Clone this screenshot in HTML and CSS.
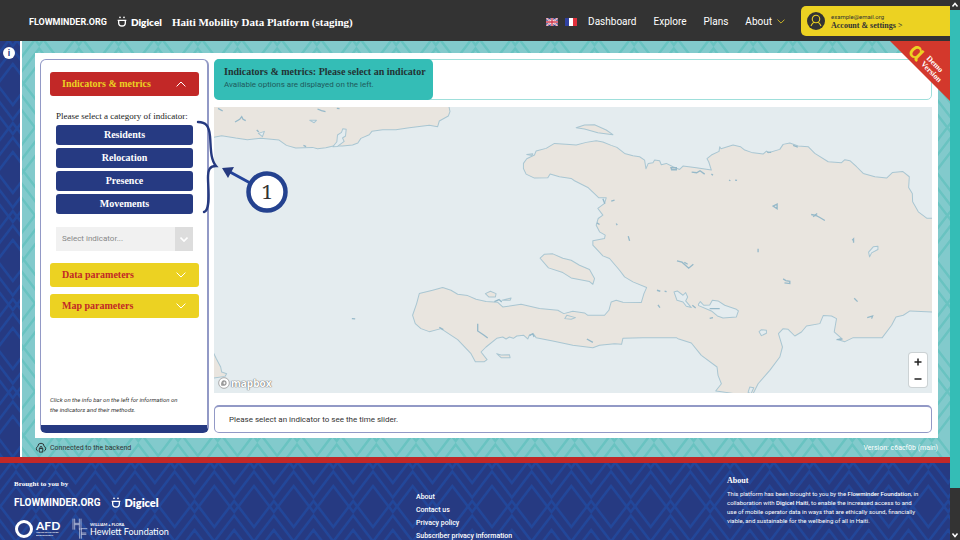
FILE: index.html
```html
<!DOCTYPE html>
<html lang="en">
<head>
<meta charset="utf-8">
<title>Haiti Mobility Data Platform (staging)</title>
<link rel="stylesheet" href="styles.css">
</head>
<body>
<svg class="defs" aria-hidden="true">
  <symbol id="digicel" viewBox="0 0 30 33">
    <path d="M2 13h26M5 14v7a10 9 0 0 0 20 0v-7" fill="none" stroke="currentColor" stroke-width="4"/>
    <circle cx="9" cy="4" r="2.6" fill="currentColor"/><circle cx="21" cy="4" r="2.6" fill="currentColor"/>
  </symbol>
  <symbol id="chevron" viewBox="0 0 10 6"><path d="M.6.6 5 5 9.400.6" fill="none" stroke="currentColor"/></symbol>
</svg>
<div class="window">
  <div class="page">
    <header class="topbar">
      <a class="wordmark" href="#">FLOWMINDER.ORG</a>
      <a class="digicel" href="#"><svg><use href="#digicel"/></svg>Digicel</a>
      <h1>Haiti Mobility Data Platform (staging)</h1>
      <nav>
        <a class="flag" href="#" aria-label="English"><svg viewBox="0 0 36 24"><path fill="#35408c" d="M0 0h36v24H0z"/><path d="m0 0 36 24M36 0 0 24" stroke="#fff" stroke-width="5"/><path d="m0 0 36 24M36 0 0 24" stroke="#d0374b" stroke-width="2"/><path d="M18 0v24M0 12h36" stroke="#fff" stroke-width="8"/><path d="M18 0v24M0 12h36" stroke="#d0374b" stroke-width="4"/></svg></a>
        <a class="flag" href="#" aria-label="Français"><svg viewBox="0 0 36 24"><path fill="#3041a0" d="M0 0h12v24H0z"/><path fill="#fff" d="M12 0h12v24H12z"/><path fill="#e0303c" d="M24 0h12v24H24z"/></svg></a>
        <a href="#">Dashboard</a>
        <a href="#">Explore</a>
        <a href="#">Plans</a>
        <a class="has-menu" href="#">About<svg><use href="#chevron"/></svg></a>
      </nav>
      <a class="account" href="#">
        <svg viewBox="0 0 36 36"><circle cx="18" cy="18" r="18" fill="#333"/><g fill="none" stroke="#ecd222" stroke-width="2.200"><circle cx="18" cy="14" r="7.500"/><path d="M8 28c2-5 4-7 6.500-7.500M28 28c-2-5-4-7-6.500-7.500"/></g></svg>
        <span><small>example@email.org</small><strong>Account &amp; settings &gt;</strong></span>
      </a>
    </header>

    <main>
      <aside class="infobar"><button aria-label="Information">i</button></aside>
      <div class="workspace">
        <div class="panel">
          <section class="controls">
            <button class="accordion open">Indicators &amp; metrics<svg><use href="#chevron"/></svg></button>
            <div class="category">
              <p>Please select a category of indicator:</p>
              <button>Residents</button>
              <button>Relocation</button>
              <button>Presence</button>
              <button>Movements</button>
              <div class="select">
                <select aria-label="Indicator"><option>Select indicator...</option></select>
                <span><svg><use href="#chevron"/></svg></span>
              </div>
            </div>
            <button class="accordion">Data parameters<svg><use href="#chevron"/></svg></button>
            <button class="accordion">Map parameters<svg><use href="#chevron"/></svg></button>
            <p class="hint">Click on the info bar on the left for information on the indicators and their methods.</p>
          </section>
          <section class="results">
            <div class="summary">
              <div><h2>Indicators &amp; metrics: Please select an indicator</h2><p>Available options are displayed on the left.</p></div>
            </div>
            <div class="map">
              <svg class="coast" viewBox="15 21 2151 858" preserveAspectRatio="xMidYMid slice" aria-label="Map of Haiti">
                <g fill="#e9e5df" stroke="#a9c6d2" stroke-width="3" stroke-linejoin="round">
                  <path d="M10 113 38 107 80 114 115 119 155 115 210 120 232 136 260 144 285 143 310 142 325 146 350 143 372 138 400 138 430 135 446 129 455 115 480 104 488 94 520 89 560 89 600 83 660 76 685 80 690 63 717 48 722 35 717 10H10z"/>
                  <path d="M10 750 22 775 35 800 38 815 53 820 48 828 10 834z"/>
                  <path d="M942 190 952 176 975 165 980 153 1010 145 1035 130 1080 133 1100 135 1130 127 1160 122 1180 126 1205 136 1222 142 1245 160 1270 167 1290 170 1305 180 1309 206 1316 190 1330 188 1335 180 1350 182 1355 194 1370 190 1390 200 1410 208 1420 198 1460 203 1505 210 1497 185 1492 176 1505 165 1528 154 1530 140 1534 146 1570 135 1592 140 1605 150 1625 157 1660 162 1670 153 1676 158 1710 148 1720 133 1740 129 1765 138 1795 140 1815 160 1855 185 1895 188 1905 179 1920 182 1940 200 1960 220 1995 230 2030 234 2048 217 2078 214 2098 230 2096 262 2107 280 2108 305 2125 335 2150 354 2180 355V636L2100 632 2080 645 2058 650 2045 675 2017 712 1930 712 1905 724 1885 718 1895 714 1873 695 1880 655 1865 647 1840 646 1830 670 1790 677 1775 695 1755 707 1735 687 1720 685 1706 700 1718 740 1710 770 1680 810 1645 850 1625 890H1570V879L1530 873 1518 872 1535 850 1525 825 1522 800 1475 765 1445 728 1405 715 1400 712 1300 712 1240 714 1236 732 1215 730 1170 735 1150 742 1090 735 1030 722 980 712 972 701 960 704 955 716 943 705 922 707 912 714 900 710 890 716 880 710 862 714 830 740 815 755 833 778 825 784 798 784 785 760 745 718 695 685 660 694 635 685 618 670 610 645 622 610 630 580 670 570 700 562 725 570 745 582 775 586 800 597 830 604 865 606 880 620 935 612 990 625 1045 630 1063 640 1090 633 1125 638 1135 645 1185 645 1198 630 1205 605 1220 600 1240 606 1295 607 1303 580 1311 562 1270 545 1245 530 1230 510 1200 475 1180 467 1150 435 1150 422 1185 415 1187 405 1170 395 1160 375 1166 355 1180 345 1165 325 1185 310 1190 293 1168 293 1135 262 1095 242 1085 235 1050 230 1022 222 1015 233 975 234 950 222 942 205z"/>
                  <path d="M1100 83 1125 75 1155 74 1190 90 1210 104 1165 98 1125 87zM992 474 1005 462 1030 461 1060 474 1085 480 1110 495 1140 508 1155 535 1150 552 1140 544 1085 533 1060 517 1017 503zM828 580 843 573 860 580 858 590 838 590zM878 600 905 593 902 600zM862 760 875 764 900 763 902 772 875 772zM1066 655 1072 645 1098 652 1085 657zM952 163 970 161 968 166z"/>
                </g>
                <g fill="#e4ecef" stroke="#a9c6d2" stroke-width="3" stroke-linejoin="round">
                  <path d="m385 105 12-8 4-11 10 2-2 20-9 6 5 10-20 15-14 1 12-15zM1393 575 1403 572 1420 585 1428 577 1434 590 1428 602 1445 622 1430 618 1420 605 1402 600zM1466 612 1472 604 1482 615 1500 614 1508 600 1525 602 1545 615 1580 627 1586 632 1580 650 1540 653 1523 647 1505 632 1467 616zM1648 694 1655 688 1670 690 1670 699 1655 706zM1976 456 1990 440 2004 438 2004 448 1985 458 1979 470zM1615 876 1620 860 1632 862 1624 880zM148 100 166 94 160 110zM302 61 322 61 315 68z"/>
                </g>
                <g fill="none" stroke="#96b9c9" stroke-width="4">
                  <path d="m78 66 14-8 6-8 4 8 8 4M27 25l14 8M325 27l12 5 12 3M383 25l8 1M143 90l6 6M283 136l8 4M428 655l10 1M805 670v22l18 12 12 9M855 604l14-6 8 7M1132 716l18 10M1205 303l10-3M1220 370l3 5M1256 408l4 14M1402 482l15 4 20 18 14-12M1424 486l10 6M1448 615l10 8M1342 570l10 3M1365 573l6 1M1345 614l6 8M1384 203h16v6h-14zM1446 216l15 2 10-6 14 10M1505 222l5 3M1558 240l4 2M1576 240l6 1M1690 318l12-6v14zM1804 343l14 3 12 6 15 9M1810 350l12-10M1927 420l4-4v12M1645 446v10M1720 536l8 5 12 2v7l-16-2M1933 594l10 10M1972 652l16-5-3 8M1880 718l18-2M1500 654l10-2M1500 625h30M1180 296l6 15M1162 368l8 5M690 681l12 7M1750 136l14 5M1672 156l12 1M960 706l10-6 4 10"/>
                </g>
              </svg>
              <div class="attribution"><svg viewBox="0 0 36 36"><circle cx="18" cy="18" r="16" fill="#fff" stroke="#aaa" stroke-width="3"/><path d="M10 26c-2-10 2-16 9-16a8 8 0 0 1 7 8c0 7-7 10-16 8z" fill="#999"/><path d="m19 13 1.500 3.500L24 18l-3.500 1.500L19 23l-1.500-3.500L14 18l3.500-1.500z" fill="#fff"/></svg>mapbox</div>
              <div class="zoom"><button aria-label="Zoom in"><svg viewBox="0 0 8 8"><path d="M4 .5v7M.5 4h7"/></svg></button><button aria-label="Zoom out"><svg viewBox="0 0 8 8"><path d="M.5 4h7"/></svg></button></div>
            </div>
            <div class="timeline">Please select an indicator to see the time slider.</div>
          </section>
          <svg class="callout" viewBox="190 115 105 105">
            <g fill="none" stroke="#263a80" stroke-linecap="round">
              <path d="M198 122c8 0 11 4 12 14s0 23 6 30c-6 0-8 3-8 12s3 32-4 34" stroke-width="2.400"/>
              <path d="m230 172 22 12" stroke="#24449a" stroke-width="3"/>
            </g>
            <path d="m222 168 12-1-6 11z" fill="#263a80"/>
            <circle cx="267" cy="192" r="18.500" fill="#fff" stroke="#24428f" stroke-width="4.500"/>
            <text x="267" y="199" text-anchor="middle">1</text>
          </svg>
        </div>
        <div class="status">
          <svg viewBox="0 0 34 30"><g fill="none" stroke="#222" stroke-width="2.500"><path d="M8 25a7 7 0 0 1 0-13 9 9 0 0 1 18 0 7 7 0 0 1 0 13"/><path d="M12 18h10v10H12zM14 18v-3a3 3 0 0 1 6 0v3"/></g></svg>
          <span>Connected to the backend</span>
          <span class="version">Version: c6acf0b (main)</span>
        </div>
        <svg class="ribbon" viewBox="0 0 60 60"><path d="M0 0h60v60z" fill="#d3382c"/><g transform="rotate(45)"><text class="alpha" x="20" y="-4">α</text><text class="demo" x="38" y="-13">Demo</text><text class="demo" x="38" y="-5">Version</text></g></svg>
      </div>
    </main>

    <footer>
      <div class="partners">
        <h3>Brought to you by</h3>
        <div class="logos">
          <span class="wordmark">FLOWMINDER.ORG</span>
          <span class="digicel"><svg><use href="#digicel"/></svg>Digicel</span>
        </div>
        <div class="logos">
          <span class="afd"><svg viewBox="0 0 20 20"><circle cx="10" cy="10" r="7.500" fill="none" stroke="#fff" stroke-width="3"/></svg><span>AFD<small>AGENCE FRANÇAISE DE DÉVELOPPEMENT</small></span></span>
          <span class="hewlett"><svg viewBox="0 0 48 63"><g fill="none" stroke="#dfe4f3" stroke-width="2"><path d="M3 2v33M8 2v33M22 2v33M27 2v33M8 16h14M8 20h14M23 31v31M28 31v31M28 32h18M28 45h15M28 49h15"/></g></svg><span><small>WILLIAM + FLORA</small>Hewlett Foundation</span></span>
        </div>
      </div>
      <nav class="links">
        <a href="#">About</a><a href="#">Contact us</a><a href="#">Privacy policy</a><a href="#">Subscriber privacy information</a>
      </nav>
      <div class="about">
        <h3>About</h3>
        <p>This platform has been brought to you by the <b>Flowminder Foundation</b>, in collaboration with <b>Digicel Haiti</b>, to enable the increased access to and use of mobile operator data in ways that are ethically sound, financially viable, and sustainable for the wellbeing of all in Haiti.</p>
      </div>
    </footer>
  </div>
  <div class="scrollbar" aria-hidden="true">
    <svg viewBox="0 0 10 10"><path d="m2.500 6.500 2.500-3 2.500 3"/></svg>
    <div class="track"><div class="thumb"></div></div>
    <svg viewBox="0 0 10 10"><path d="m2.500 3.500 2.500 3 2.500-3"/></svg>
  </div>
</div>
</body>
</html>
```
FILE: styles.css
```css
* { box-sizing: border-box; margin: 0; }
:root {
  --navy: #263a82;
  --yellow: #ecd222;
  --red: #c22827;
  --teal: #34bdb6;
  --lilac: #9299c6;
  --serif: "Liberation Serif", serif;
  --sans: Roboto, sans-serif;
}
body { font: 7px/10px var(--sans); color: #333; }
button, select { font: inherit; color: inherit; border: 0; padding: 0; }
a { color: inherit; text-decoration: none; }
h1, h2, h3 { font-family: var(--serif); }
.defs { position: absolute; width: 0; height: 0; }
.window { display: flex; height: 100vh; overflow: hidden; background: #333; }
.page { flex: 1; min-width: 0; display: flex; flex-direction: column; }

.topbar { display: flex; align-items: center; height: 41px; flex: none; padding: 2px 0 0 29px; background: #333; color: #fff; }
.topbar h1 { font-size: 11px; line-height: 16px; white-space: nowrap; }
.wordmark { font: bold 9px/16px var(--sans); margin-right: 10px; white-space: nowrap; }
.digicel { display: flex; align-items: center; gap: 4px; font: 800 10px/12px Lato, sans-serif; margin-right: 10px; }
.digicel svg { width: 10px; height: 11px; }
.topbar nav { display: flex; align-items: center; gap: 17px; margin-left: auto; margin-right: 16px; font-size: 10px; line-height: 14px; }
.flag { display: flex; margin-right: -10px; }
.flag svg { width: 12px; height: 8px; }
.flag + .flag { margin-right: -6px; }
.has-menu { display: flex; align-items: center; gap: 5px; }
.has-menu svg { width: 8px; height: 5px; color: var(--yellow); }
.account { display: flex; align-items: center; gap: 6px; width: 149px; height: 30px; margin-bottom: 2px; padding-left: 6px; border-radius: 5px 0 0 5px; background: var(--yellow); color: #333; }
.account svg { width: 18px; height: 18px; }
.account small, .account strong { display: block; line-height: 9px; }
.account small { font-size: 6px; }
.account strong { font-family: var(--serif); font-size: 8px; }

main { flex: 1; min-height: 0; display: flex; }
.infobar, footer { background: var(--navy) url("data:image/svg+xml,%3Csvg xmlns='http://www.w3.org/2000/svg' width='119' height='88' viewBox='0 0 119 88'%3E%3Cdefs%3E%3Cpath id='z' d='M-39.67 0l19.83 26L0 0l19.83 26L39.67 0L59.5 26L79.33 0L99.17 26L119 0L138.83 26' fill='none' stroke='%2322479a' stroke-width='2.500'/%3E%3Cg id='s'%3E%3Cuse href='%23z'/%3E%3Cuse href='%23z' y='14.500'/%3E%3Cuse href='%23z' y='29'/%3E%3C/g%3E%3C/defs%3E%3Cuse href='%23s'/%3E%3Cuse href='%23s' y='88'/%3E%3Cuse href='%23s' x='19.830' y='44'/%3E%3Cuse href='%23s' x='19.830' y='-44'/%3E%3C/svg%3E"); }
.infobar { width: 20px; background-position: -7px 38px; padding: 6px 3px; }
.infobar button { width: 12px; height: 12px; border-radius: 50%; background: #fff; color: var(--navy); font: bold 9px/12px var(--sans); display: block; }
.workspace { flex: 1; min-width: 0; position: relative; display: flex; flex-direction: column; border-left: 2px solid #fff; padding: 12px 12px 0 13px;
  background: #82cacc url("data:image/svg+xml,%3Csvg xmlns='http://www.w3.org/2000/svg' width='119' height='88' viewBox='0 0 119 88'%3E%3Cdefs%3E%3Cpath id='z' d='M-39.67 0l19.83 26L0 0l19.83 26L39.67 0L59.5 26L79.33 0L99.17 26L119 0L138.83 26' fill='none' stroke='%2369c3c1' stroke-width='2.500'/%3E%3Cg id='s'%3E%3Cuse href='%23z'/%3E%3Cuse href='%23z' y='14.500'/%3E%3Cuse href='%23z' y='29'/%3E%3C/g%3E%3C/defs%3E%3Cuse href='%23s'/%3E%3Cuse href='%23s' y='88'/%3E%3Cuse href='%23s' x='19.830' y='44'/%3E%3Cuse href='%23s' x='19.830' y='-44'/%3E%3C/svg%3E") 37px 37px; }
.panel { flex: 1; min-height: 0; position: relative; display: grid; grid-template-columns: 169px 1fr; gap: 5px; padding: 6px 6px 6px 5px; background: #fff; }

.controls { display: flex; flex-direction: column; padding: 12px 8px 0 9px; border: 1px solid var(--lilac); border-right-width: 2px; border-bottom: 8px solid var(--navy); border-radius: 6px; }
.accordion { display: flex; align-items: center; justify-content: space-between; height: 24px; margin-bottom: 7px; padding: 0 13px 0 12px; border-radius: 3px; background: var(--yellow); color: var(--red); font: bold 10px/14px var(--serif); }
.accordion svg { width: 10px; height: 6px; color: #fff; }
.accordion.open { background: var(--red); color: var(--yellow); }
.accordion.open svg { transform: rotate(180deg); }
.category { display: flex; flex-direction: column; gap: 3px; margin: 7px 6px 12px; }
.category p { font: 9px/12px var(--serif); color: #222; white-space: nowrap; }
.category button { height: 20px; border-radius: 3px; background: var(--navy); color: #fff; font: bold 10px/12px var(--serif); }
.select { display: flex; height: 24px; margin-top: 10px; background: #f1f1f1; font-size: 8px; }
.select select { flex: 1; min-width: 0; appearance: none; background: none; padding-left: 6px; color: #888; }
.select span { display: grid; place-items: center; width: 18px; background: #ddd; color: #fff; }
.select svg { width: 8px; height: 5px; stroke-width: 2; }
.hint { max-width: 135px; margin-top: auto; padding-bottom: 10px; font-size: 6px; font-style: italic; }

.results { min-width: 0; display: flex; flex-direction: column; }
.summary { height: 41px; flex: none; margin-bottom: 7px; border: 1px solid #9fdfdb; border-radius: 5px; }
.summary div { width: 219px; height: 41px; margin: -1px; padding: 7px 0 0 10px; border-radius: 5px; background: var(--teal); color: #1f5a5c; white-space: nowrap; }
.summary h2 { font-size: 10px; line-height: 12px; color: #233; }
.summary p { font-size: 8px; line-height: 14px; }
.map { flex: 1; min-height: 0; position: relative; background: #e4ecef; }
.coast { display: block; width: 100%; height: 100%; }
.attribution { position: absolute; left: 4px; bottom: 3px; display: flex; align-items: center; gap: 1px; color: #fff; font: 700 10px/14px "Open Sans", sans-serif; text-shadow: 0 0 1px #777, 0 0 1px #777, 0 0 1px #777; }
.attribution svg { width: 12px; height: 12px; }
.zoom { position: absolute; right: 5px; bottom: 6px; width: 18px; border-radius: 3px; background: #fff; box-shadow: 0 0 0 1px #ccd2d4; }
.zoom button { display: grid; place-items: center; width: 18px; height: 17px; background: none; }
.zoom svg { width: 8px; height: 8px; stroke: #222; stroke-width: 1.500; }
.timeline { flex: none; height: 28px; margin-top: 12px; padding: 0 14px; border: 1px solid var(--lilac); border-top-width: 2px; border-radius: 5px; font-size: 8px; line-height: 25px; }
.callout { position: absolute; left: 155px; top: 62px; width: 105px; height: 105px; pointer-events: none; }
.callout text { font: 20px "Noto Serif", serif; fill: #333; }
.status { display: flex; align-items: center; gap: 3px; height: 19px; flex: none; }
.status svg { width: 12px; height: 11px; }
.version { margin-left: auto; color: #fff; }
.ribbon { position: absolute; right: 0; top: 0; width: 60px; height: 60px; overflow: visible; }
.ribbon .alpha { font: 500 24px var(--sans); fill: var(--yellow); }
.ribbon .demo { font: bold 8px var(--serif); fill: #fff; }

footer { flex: none; display: grid; grid-template-columns: 402px 1fr 211px; height: 83px; padding: 0 12px 0 14px; border-top: 6px solid var(--red); background-position: 16px -6px; color: #fff; }
footer h3 { font-size: 7px; line-height: 10px; }
.partners { padding-top: 16px; }
.logos { display: flex; align-items: center; height: 25px; margin-top: 1px; }
.logos .wordmark { font-size: 10px; }
.logos .digicel { font-size: 11px; }
.afd, .hewlett { display: flex; align-items: center; gap: 2px; }
.afd { width: 58px; font: 700 12px/10px Lato, sans-serif; }
.afd > svg { width: 20px; height: 20px; }
.afd small, .hewlett small { display: block; white-space: nowrap; }
.afd small { width: 26px; overflow: hidden; font-size: 2px; line-height: 3px; white-space: normal; }
.hewlett { font: 9px/9px Lato, sans-serif; white-space: nowrap; }
.hewlett > svg { width: 16px; height: 21px; }
.hewlett small { font: bold 4px/5px Lato, sans-serif; }
.links { display: flex; flex-direction: column; padding-top: 28px; font-size: 7px; line-height: 13px; font-weight: 500; }
.about { padding-top: 13px; font-size: 6px; line-height: 9px; }
.about h3 { font-size: 8px; }
.about p { max-width: 193px; margin-top: 3px; }
.about b { font-weight: 500; }

.scrollbar { width: 10px; flex: none; display: flex; flex-direction: column; background: #333; }
.scrollbar svg { width: 10px; height: 10px; flex: none; fill: none; stroke: #fff; stroke-width: 1.500; }
.track { flex: 1; }
.thumb { height: 92%; background: var(--teal); }
```
